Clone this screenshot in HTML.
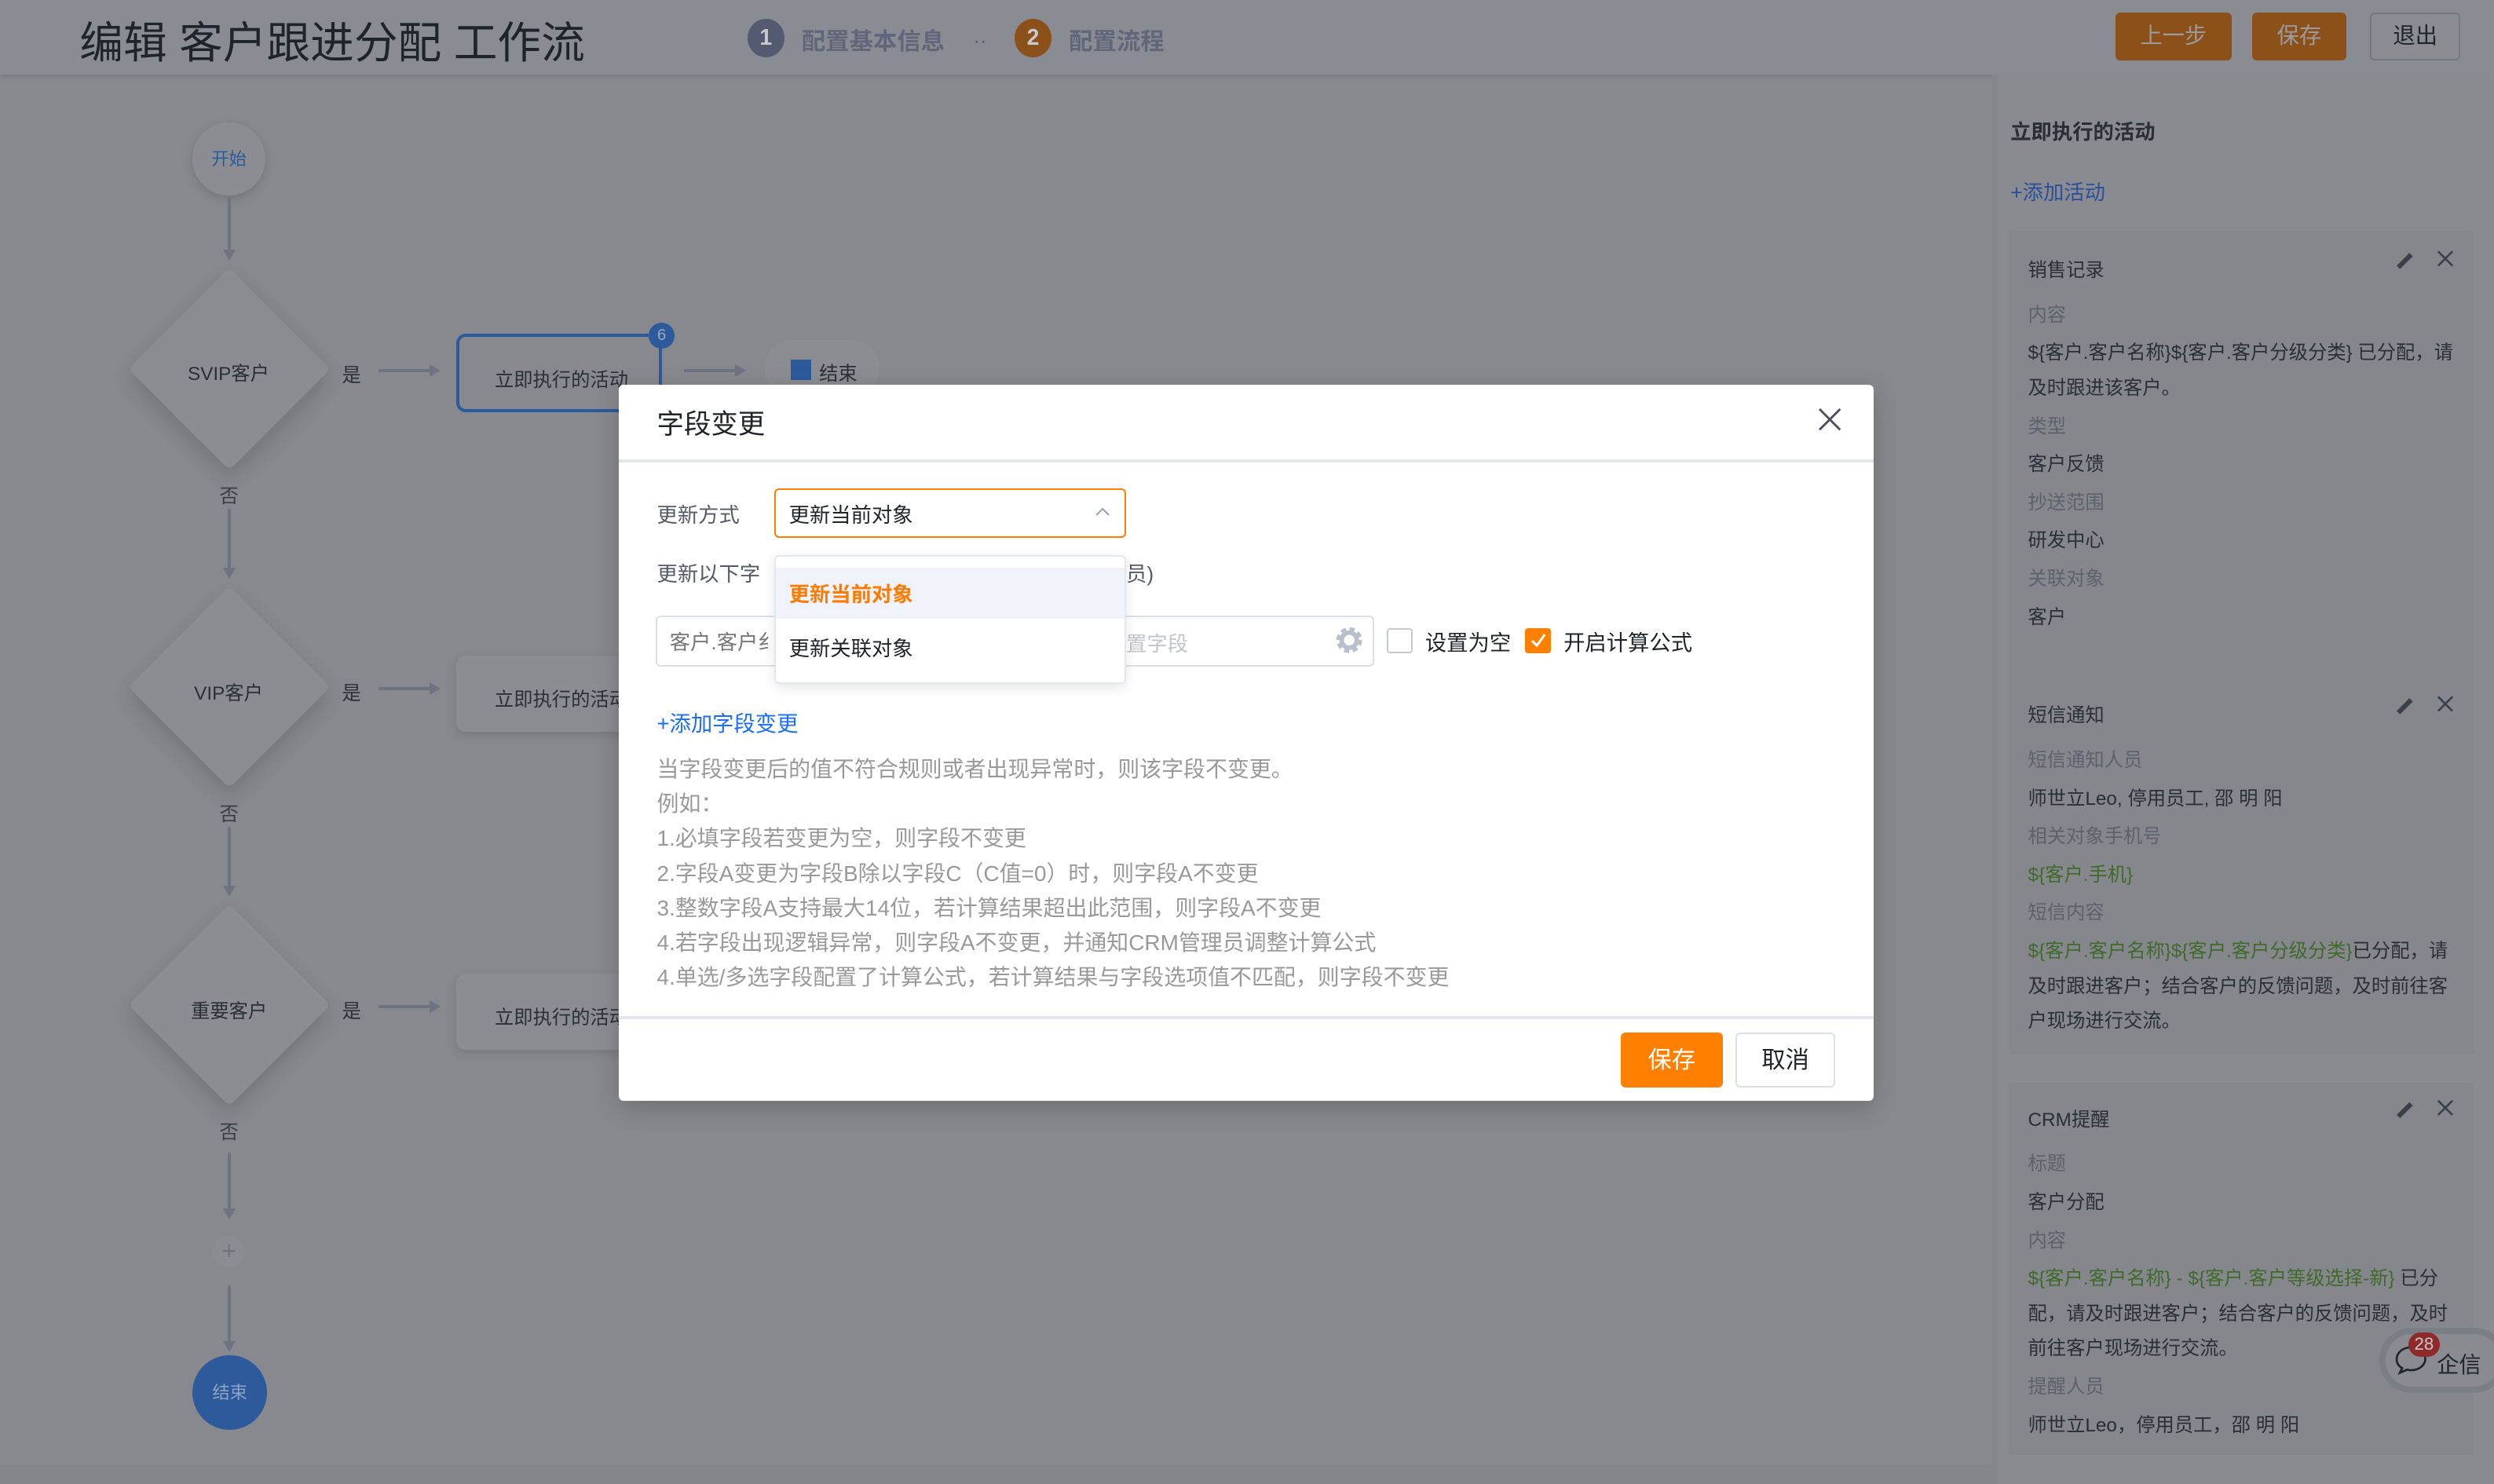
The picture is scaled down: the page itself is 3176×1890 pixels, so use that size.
<!DOCTYPE html>
<html><head><meta charset="utf-8"><style>
*{margin:0;padding:0;box-sizing:border-box}
html,body{width:3176px;height:1890px;overflow:hidden;background:#88898e}
#r{zoom:2.02551;width:1568px;height:933px;position:relative;font-family:"Liberation Sans","Noto Sans CJK SC",sans-serif;background:#88898e;overflow:hidden}
.a{position:absolute}
.hd{left:0;top:0;width:1568px;height:47px;background:#8a8c94;box-shadow:0 1px 3px rgba(0,0,0,.15)}
.btn{position:absolute;top:8px;height:30px;border-radius:3px;font-size:14px;line-height:30px;text-align:center}
.dia{position:absolute;width:90px;height:90px;background:#8c8d92;transform:rotate(45deg);border-radius:4px;box-shadow:4px 4px 12px rgba(0,0,0,.15)}
.t{position:absolute;font-size:12px;color:#2b2e36;white-space:nowrap}
.vl{position:absolute;left:143px;width:2px;background:#6f7280}
.hl{position:absolute;height:2px;background:#6f7280}
.ad{position:absolute;left:140px;width:0;height:0;border-left:4px solid transparent;border-right:4px solid transparent;border-top:7px solid #6f7280}
.ar{position:absolute;width:0;height:0;border-top:4px solid transparent;border-bottom:4px solid transparent;border-left:7px solid #6f7280}
.card{position:absolute;left:1263px;width:292px;background:#86878c}
.card div{position:absolute;left:12px;font-size:12px;white-space:nowrap}
.k{color:#5e616c}.v{color:#2b2e36}.g{color:#3f6b2a}
</style></head><body><div id="r">
<div class="a hd"></div>
<div class="a" style="left:50px;top:5px;font-size:27.5px;color:#1f232b">编辑 客户跟进分配 工作流</div>
<div class="a" style="left:470px;top:12px;width:23px;height:24px;border-radius:50%;background:#545a70;color:#c8cad2;font-size:14px;font-weight:bold;text-align:center;line-height:24px">1</div>
<div class="a" style="left:504px;top:14px;font-size:15px;font-weight:bold;color:#62667a">配置基本信息</div>
<div class="a" style="left:612px;top:14px;font-size:15px;color:#62667a">..</div>
<div class="a" style="left:638px;top:12px;width:23px;height:24px;border-radius:50%;background:#8c5019;color:#c8cad2;font-size:14px;font-weight:bold;text-align:center;line-height:24px">2</div>
<div class="a" style="left:672px;top:14px;font-size:15px;font-weight:bold;color:#62667a">配置流程</div>
<div class="btn" style="left:1330px;width:73px;background:#8c5019;color:#9a9aa0">上一步</div>
<div class="btn" style="left:1416px;width:59px;background:#8c5019;color:#9a9aa0">保存</div>
<div class="btn" style="left:1490px;width:57px;background:#8c8d92;border:1px solid #76787f;color:#1f232b;line-height:28px">退出</div>

<!-- flow -->
<div class="a" style="left:121px;top:77px;width:46px;height:46px;border-radius:50%;background:#8c8d92;box-shadow:0 2px 6px rgba(0,0,0,.15);color:#2c5a9a;font-size:11px;text-align:center;line-height:46px">开始</div>
<div class="vl" style="top:124px;height:34px"></div><div class="ad" style="top:157px"></div>
<div class="dia" style="left:99px;top:187px"></div><div class="t" style="left:118px;top:225px">SVIP客户</div>
<div class="t" style="left:215px;top:226px">是</div><div class="hl" style="left:238px;top:232px;width:33px"></div><div class="ar" style="left:270px;top:229px"></div>
<div class="a" style="left:287px;top:210px;width:129px;height:49px;border:2px solid #2c5a9a;border-radius:6px;background:#88898e"></div>
<div class="t" style="left:311px;top:229px">立即执行的活动</div>
<div class="a" style="left:408px;top:203px;width:16px;height:16px;border-radius:50%;background:#2c5a9a;color:#9ab;font-size:10px;text-align:center;line-height:16px">6</div>
<div class="hl" style="left:430px;top:232px;width:33px"></div><div class="ar" style="left:462px;top:229px"></div>
<div class="a" style="left:481px;top:214px;width:72px;height:36px;border-radius:18px;background:#8c8d92"></div>
<div class="a" style="left:497px;top:226px;width:13px;height:13px;background:#2c5a9a"></div><div class="t" style="left:515px;top:225px">结束</div>
<div class="t" style="left:138px;top:302px;color:#3a3d45">否</div>
<div class="vl" style="top:320px;height:38px"></div><div class="ad" style="top:357px"></div>
<div class="dia" style="left:99px;top:387px"></div><div class="t" style="left:122px;top:426px">VIP客户</div>
<div class="t" style="left:215px;top:426px">是</div><div class="hl" style="left:238px;top:432px;width:33px"></div><div class="ar" style="left:270px;top:429px"></div>
<div class="a" style="left:287px;top:412px;width:120px;height:48px;border-radius:6px;background:#8c8d92;box-shadow:0 2px 6px rgba(0,0,0,.12)"></div><div class="t" style="left:311px;top:430px">立即执行的活动</div>
<div class="t" style="left:138px;top:502px;color:#3a3d45">否</div>
<div class="vl" style="top:520px;height:38px"></div><div class="ad" style="top:557px"></div>
<div class="dia" style="left:99px;top:587px"></div><div class="t" style="left:120px;top:626px">重要客户</div>
<div class="t" style="left:215px;top:626px">是</div><div class="hl" style="left:238px;top:632px;width:33px"></div><div class="ar" style="left:270px;top:629px"></div>
<div class="a" style="left:287px;top:612px;width:120px;height:48px;border-radius:6px;background:#8c8d92;box-shadow:0 2px 6px rgba(0,0,0,.12)"></div><div class="t" style="left:311px;top:630px">立即执行的活动</div>
<div class="t" style="left:138px;top:702px;color:#3a3d45">否</div>
<div class="vl" style="top:725px;height:36px"></div><div class="ad" style="top:760px"></div>
<div class="a" style="left:134px;top:777px;width:20px;height:20px;border-radius:50%;background:#8c8d92;color:#6f7280;font-size:16px;text-align:center;line-height:19px">+</div>
<div class="vl" style="top:808px;height:36px"></div><div class="ad" style="top:843px"></div>
<div class="a" style="left:121px;top:852px;width:47px;height:47px;border-radius:50%;background:#2c5a9a;color:#8fa3c4;font-size:11px;text-align:center;line-height:47px">结束</div>
<div class="a" style="left:0;top:921px;width:1252px;height:12px;background:#85868b"></div>

<!-- right panel -->
<div class="a" style="left:1252px;top:47px;width:316px;height:886px;background:#8a8b91;border-left:4px solid #85868c"></div>
<div class="a" style="left:1264px;top:72px;font-size:13px;font-weight:bold;color:#2b2e36">立即执行的活动</div>
<div class="a" style="left:1264px;top:110px;font-size:13px;color:#2a4f9a">+添加活动</div>
<div class="card" style="top:145px;height:282px">
<div class="v" style="top:15px">销售记录</div>
<div class="k" style="top:43px">内容</div>
<div class="v" style="top:67px">${客户.客户名称}${客户.客户分级分类} 已分配，请</div>
<div class="v" style="top:89px">及时跟进该客户。</div>
<div class="k" style="top:113px">类型</div><div class="v" style="top:137px">客户反馈</div>
<div class="k" style="top:161px">抄送范围</div><div class="v" style="top:185px">研发中心</div>
<div class="k" style="top:209px">关联对象</div><div class="v" style="top:233px">客户</div>
</div>
<div class="card" style="top:427px;height:236px">
<div class="v" style="top:13px">短信通知</div>
<div class="k" style="top:41px">短信通知人员</div>
<div class="v" style="top:65px">师世立Leo, 停用员工, 邵 明 阳</div>
<div class="k" style="top:89px">相关对象手机号</div>
<div class="g" style="top:113px">${客户.手机}</div>
<div class="k" style="top:137px">短信内容</div>
<div style="top:161px"><span class="g">${客户.客户名称}${客户.客户分级分类}</span><span class="v">已分配，请</span></div>
<div class="v" style="top:183px">及时跟进客户；结合客户的反馈问题，及时前往客</div>
<div class="v" style="top:205px">户现场进行交流。</div>
</div>
<div class="card" style="top:681px;height:234px">
<div class="v" style="top:13px">CRM提醒</div>
<div class="k" style="top:41px">标题</div><div class="v" style="top:65px">客户分配</div>
<div class="k" style="top:89px">内容</div>
<div style="top:113px"><span class="g">${客户.客户名称} - ${客户.客户等级选择-新}</span><span class="v"> 已分</span></div>
<div class="v" style="top:135px">配，请及时跟进客户；结合客户的反馈问题，及时</div>
<div class="v" style="top:157px">前往客户现场进行交流。</div>
<div class="k" style="top:181px">提醒人员</div>
<div class="v" style="top:205px">师世立Leo，停用员工，邵 明 阳</div>
</div>
<svg class="a" style="left:1500px;top:150px" width="50" height="560" viewBox="0 0 50 560" fill="none" stroke="#3b3f4a" stroke-width="1.3">
<g><path d="M8 18 L16 10" stroke-width="3"/><path d="M33 8 L42 17 M42 8 L33 17"/></g>
<g transform="translate(0,280)"><path d="M8 18 L16 10" stroke-width="3"/><path d="M33 8 L42 17 M42 8 L33 17"/></g>
<g transform="translate(0,534)"><path d="M8 18 L16 10" stroke-width="3"/><path d="M33 8 L42 17 M42 8 L33 17"/></g>
</svg>
<div class="a" style="left:1496px;top:835px;width:80px;height:41px;border-radius:21px;border:4px solid #7c7e85;background:#8a8b91"></div>
<svg class="a" style="left:1505px;top:845px" width="22" height="20"><path d="M11 2C5.5 2 2 5.5 2 9.5c0 2.5 1.3 4.3 3.5 5.5L4 18l4.5-2c.8.2 1.700.3 2.5.3 5.5 0 9-3.5 9-7S16.5 2 11 2z" fill="none" stroke="#1f232b" stroke-width="1.3"/></svg>
<div class="a" style="left:1514px;top:838px;width:20px;height:15px;border-radius:8px;background:#8e2a2a;color:#c8c8cc;font-size:11px;text-align:center;line-height:15px">28</div>
<div class="a" style="left:1532px;top:847px;font-size:14px;color:#1f232b">企信</div>

<!-- modal -->
<div class="a" style="left:389px;top:242px;width:789px;height:450px;background:#fff;border-radius:3px;box-shadow:0 4px 16px rgba(0,0,0,.2)"></div>
<div class="a" style="left:413px;top:253px;font-size:17px;color:#1f232b">字段变更</div>
<svg class="a" style="left:1143px;top:256px" width="15" height="15"><path d="M1 1L14 14M14 1L1 14" stroke="#4a4e5a" stroke-width="1.4"/></svg>
<div class="a" style="left:389px;top:289px;width:789px;height:2px;background:#e3e5ea"></div>
<div class="a" style="left:413px;top:313px;font-size:13px;color:#555a66">更新方式</div>
<div class="a" style="left:487px;top:307px;width:221px;height:31px;border:1px solid #ff8000;border-radius:3px"></div>
<div class="a" style="left:496px;top:313px;font-size:13px;color:#1f232b">更新当前对象</div>
<svg class="a" style="left:688px;top:318px" width="10" height="8"><path d="M1 6L5 2L9 6" fill="none" stroke="#9aa0ad" stroke-width="1"/></svg>
<div class="a" style="left:413px;top:350px;font-size:13px;color:#555a66">更新以下字</div>
<div class="a" style="left:708px;top:350px;font-size:13px;color:#555a66">员)</div>
<div class="a" style="left:412px;top:387px;width:452px;height:32px;border:1px solid #dcdfe6;border-radius:3px"></div>
<div class="a" style="left:421px;top:393px;font-size:13px;color:#777">客户.客户纟</div>
<div class="a" style="left:708px;top:394px;font-size:13px;color:#c0c4cc">置字段</div>
<svg class="a" style="left:839px;top:393px" width="19" height="19" viewBox="0 0 20 20"><circle cx="10" cy="10" r="6.5" fill="none" stroke="#b8c0cc" stroke-width="4" stroke-dasharray="3 2.1"/><circle cx="10" cy="10" r="5" fill="none" stroke="#b8c0cc" stroke-width="3"/></svg>
<div class="a" style="left:872px;top:395px;width:16px;height:16px;border:1px solid #c4c8d0;border-radius:2px"></div>
<div class="a" style="left:896px;top:393px;font-size:13.5px;color:#1f232b">设置为空</div>
<div class="a" style="left:959px;top:395px;width:16px;height:16px;background:#ff8000;border-radius:2px"></div>
<svg class="a" style="left:962px;top:398px" width="10" height="10"><path d="M1 5L4 8L9 1" fill="none" stroke="#fff" stroke-width="1.5"/></svg>
<div class="a" style="left:983px;top:393px;font-size:13.5px;color:#1f232b">开启计算公式</div>
<!-- dropdown -->
<div class="a" style="left:487px;top:349px;width:221px;height:81px;background:#fff;border:1px solid #e4e7ed;border-radius:3px;box-shadow:0 2px 8px rgba(0,0,0,.1)"></div>
<div class="a" style="left:488px;top:357px;width:219px;height:32px;background:#f0f3fa"></div>
<div class="a" style="left:496px;top:363px;font-size:13px;font-weight:bold;color:#ff7a00">更新当前对象</div>
<div class="a" style="left:496px;top:397px;font-size:13px;color:#1f232b">更新关联对象</div>
<div class="a" style="left:413px;top:444px;font-size:13.5px;color:#1a6dff">+添加字段变更</div>
<div class="a" style="left:413px;top:473px;font-size:13.8px;color:#999;line-height:21.8px;white-space:nowrap">当字段变更后的值不符合规则或者出现异常时，则该字段不变更。<br>例如：<br>1.必填字段若变更为空，则字段不变更<br>2.字段A变更为字段B除以字段C（C值=0）时，则字段A不变更<br>3.整数字段A支持最大14位，若计算结果超出此范围，则字段A不变更<br>4.若字段出现逻辑异常，则字段A不变更，并通知CRM管理员调整计算公式<br>4.单选/多选字段配置了计算公式，若计算结果与字段选项值不匹配，则字段不变更</div>
<div class="a" style="left:389px;top:639px;width:789px;height:2px;background:#e3e5ea"></div>
<div class="a" style="left:1019px;top:649px;width:64px;height:35px;background:#ff8000;border-radius:3px;color:#fff;font-size:15px;text-align:center;line-height:35px">保存</div>
<div class="a" style="left:1091px;top:649px;width:63px;height:35px;border:1px solid #dcdfe6;border-radius:3px;color:#1f232b;font-size:15px;text-align:center;line-height:33px">取消</div>
</div></body></html>
